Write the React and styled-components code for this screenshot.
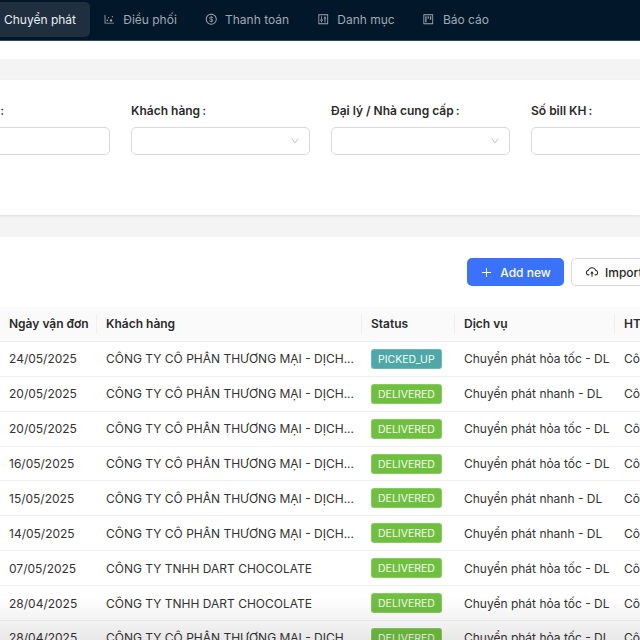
import React from "react";
import styled, { createGlobalStyle } from "styled-components";
import { AiOutlineDotChart, AiOutlineDollarCircle, AiOutlineControl, AiOutlineProject, AiOutlineCloudUpload, AiOutlinePlus, AiOutlineDown } from "react-icons/ai";

const Global = createGlobalStyle`
  html, body { margin: 0; padding: 0; background: #fff; }
  body { font-family: Inter, "Noto Sans", sans-serif; color: #262626; }
`;
const Page = styled.div`
  position: relative; width: 640px; height: 640px; overflow: hidden; background: #f4f4f4;
`;
const Nav = styled.nav`
  height: 41px; background: #03172b; display: flex; align-items: center; padding-bottom: 1px; box-sizing: border-box; border-bottom: 1px solid #33475a;
`;
const Tab = styled.div`
  display: flex; align-items: center; gap: 8px; height: 35px; box-sizing: border-box; margin-right: ${p => (p.$active ? "-1px" : "0")};
  padding: 0 13.7px 0 ${p => (p.$active ? "4px" : "14px")};
  border-radius: 0 5px 5px 0; font-size: 12px;
  color: ${p => (p.$active ? "#e9edf1" : "#a0a9b3")};
  background: ${p => (p.$active ? "#1f2f40" : "transparent")};
  svg { font-size: 12.5px; }
`;
const WhiteStrip = styled.div`height: 18px; background: #fff;`;
const Spacer = styled.div`height: 21px; background: #f4f4f4;`;
const FilterCard = styled.section`
  height: 135px; background: #fff; box-shadow: 0 1px 3px rgba(0,0,0,.09); box-sizing: border-box;
  padding-top: 23px; display: grid; grid-template-columns: repeat(4, 179px); column-gap: 21px; margin-left: -69px;
`;
const Field = styled.div`display: flex; flex-direction: column; gap: 8px;`;
const Label = styled.label`font-size: 12px; font-weight: 600; line-height: 16px; color: #2b2b2b; white-space: nowrap;`;
const Colon = styled.span`margin-left: 2px;`;
const Input = styled.div`
  height: 28px; box-sizing: border-box; border: 1px solid #d9d9d9; border-radius: 5px; background: #fff;
  display: flex; align-items: center; justify-content: flex-end; padding-right: 9px; color: #bcbcbc; font-size: 10px;
`;
const TableCard = styled.section`background: #fff; height: 404px; margin-top: 22px; padding-top: 21px; box-sizing: border-box;`;
const Actions = styled.div`display: flex; gap: 7px; padding-left: 467px; height: 28px; width: 300px;`;
const PrimaryButton = styled.button`
  flex: none; width: 97px; height: 28px; border: 0; border-radius: 5px; background: #3b72fb; color: #fff;
  font: 500 12px Inter, sans-serif; display: flex; align-items: center; justify-content: center; gap: 7px; padding: 0;
  svg { font-size: 13px; }
`;
const GhostButton = styled.button`
  flex: none; width: 90px; height: 28px; border: 1px solid #d9d9d9; border-radius: 5px; background: #fff; color: #262626;
  font: 500 12px Inter, sans-serif; display: flex; align-items: center; gap: 6px; padding: 0 0 0 13px;
  svg { font-size: 14px; }
`;
const Table = styled.div`margin-top: 21px; width: 700px;`;
const Row = styled.div`
  display: grid; grid-template-columns: 97px 265px 93px 160px 60px; height: 34.9px; box-sizing: border-box;
  border-bottom: 1px solid #f0f0f0; align-items: center; font-size: 12px; color: #333; white-space: nowrap;
`;
const HeadRow = styled(Row)`background: #fafafa; font-weight: 600; color: #2b2b2b;`;
const Cell = styled.div`
  padding-left: 9px; box-sizing: border-box; overflow: hidden; position: relative;
`;
const HeadCell = styled(Cell)`
  border-right: 1px solid #f0f0f0; height: 20px; line-height: 20px; overflow: visible;
`;
const Tag = styled.span`
  display: inline-block; height: 20px; line-height: 19px; box-sizing: border-box; padding: 0 6px; border-radius: 3px;
  font-size: 10.5px; color: #f4fbf0; border: 1px solid rgba(255,255,255,.18);
  background: ${p => p.$bg}; vertical-align: middle;
`;
const Fade = styled.div`
  position: absolute; left: 0; right: 0; bottom: 0; height: 44px;
  background: linear-gradient(to bottom, rgba(0,0,0,0), rgba(0,0,0,.09));
  pointer-events: none;
`;

const A = "CÔNG TY CỔ PHẦN THƯƠNG MẠI - DỊCH...";
const B = "CÔNG TY TNHH DART CHOCOLATE";
const F = "Chuyển phát hỏa tốc - DL";
const N = "Chuyển phát nhanh - DL";
const rows = [
  ["24/05/2025", A, "PICKED_UP", F],
  ["20/05/2025", A, "DELIVERED", N],
  ["20/05/2025", A, "DELIVERED", F],
  ["16/05/2025", A, "DELIVERED", F],
  ["15/05/2025", A, "DELIVERED", N],
  ["14/05/2025", A, "DELIVERED", N],
  ["07/05/2025", B, "DELIVERED", F],
  ["28/04/2025", B, "DELIVERED", F],
  ["28/04/2025", A, "DELIVERED", F],
];
const fields = [["Mã vận đơn", false], ["Khách hàng", true], ["Đại lý / Nhà cung cấp", true], ["Số bill KH", false]];

export default function App() {
  return (
    <Page>
      <Global />
      <Nav>
        <Tab $active>Chuyển phát</Tab>
        <Tab><AiOutlineDotChart />Điều phối</Tab>
        <Tab><AiOutlineDollarCircle />Thanh toán</Tab>
        <Tab><AiOutlineControl />Danh mục</Tab>
        <Tab><AiOutlineProject />Báo cáo</Tab>
      </Nav>
      <WhiteStrip />
      <Spacer />
      <FilterCard>
        {fields.map(([l, d]) => (
          <Field key={l}>
            <Label>{l}<Colon>:</Colon></Label>
            <Input>{d && <AiOutlineDown />}</Input>
          </Field>
        ))}
      </FilterCard>
      <TableCard>
        <Actions>
          <PrimaryButton><AiOutlinePlus />Add new</PrimaryButton>
          <GhostButton><AiOutlineCloudUpload />Import</GhostButton>
        </Actions>
        <Table>
          <HeadRow>
            <HeadCell>Ngày vận đơn</HeadCell>
            <HeadCell>Khách hàng</HeadCell>
            <HeadCell>Status</HeadCell>
            <HeadCell>Dịch vụ</HeadCell>
            <HeadCell>HTTT</HeadCell>
          </HeadRow>
          {rows.map((r, i) => (
            <Row key={i}>
              <Cell>{r[0]}</Cell>
              <Cell>{r[1]}</Cell>
              <Cell><Tag $bg={r[2] === "PICKED_UP" ? "#4fa8a8" : "#70c040"}>{r[2]}</Tag></Cell>
              <Cell>{r[3]}</Cell>
              <Cell>Công nợ</Cell>
            </Row>
          ))}
        </Table>
      </TableCard>
      <Fade />
    </Page>
  );
}
